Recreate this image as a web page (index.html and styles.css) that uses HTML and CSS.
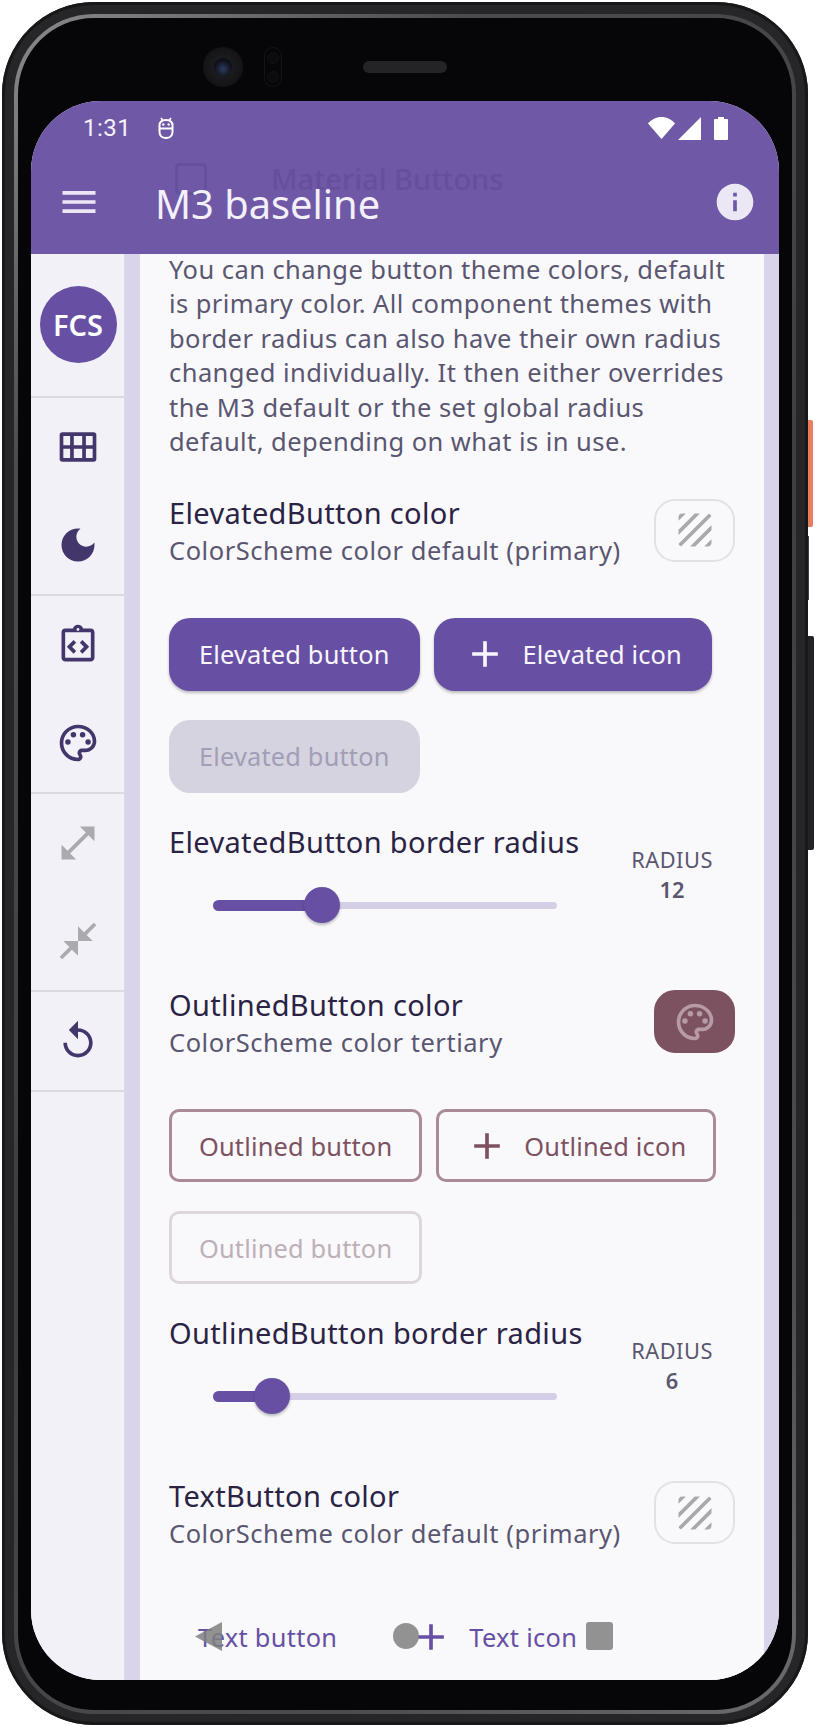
FILE: index.html
```html
<!DOCTYPE html>
<html lang="en">
<head>
<meta charset="utf-8">
<title>M3 baseline</title>
<link rel="stylesheet" href="styles.css">
</head>
<body>
<div class="device">
  <span class="side side-orange"></span>
  <span class="side side-seam"></span>
  <span class="side side-power"></span>
  <div class="rim">
    <div class="bezel">
      <div class="sensors">
        <span class="camera"><span class="lens"></span></span>
        <span class="pill"><span class="pill-dot"></span><span class="pill-dot"></span></span>
        <span class="speaker"></span>
      </div>
      <div class="screen">
        <header class="appbar">
          <div class="ghost">
            <span class="ghost-box"></span>
            <span class="ghost-text">Material Buttons</span>
          </div>
          <div class="status">
            <span class="clock">1:31</span>
            <svg class="bug" viewBox="0 0 16 22"><path d="M3 1l2 2.500M13 1l-2 2.500" fill="none" stroke="#fff" stroke-width="1.600"/><path d="M1.500 8.500C1.500 5 4 3 8 3s6.500 2 6.500 5.500v6.500C14.500 18.500 12 21 8 21s-6.500-2.500-6.500-6V8.500zM1.500 11.500h13" fill="none" stroke="#fff" stroke-width="2"/><circle cx="5.300" cy="7.500" r="1.200" fill="#fff"/><circle cx="10.700" cy="7.500" r="1.200" fill="#fff"/></svg>
            <span class="status-gap"></span>
            <svg class="wifi" viewBox="0 0 27 22"><path d="M13.500 22L0 6.500C3.500 2.500 8 0 13.500 0S23.500 2.500 27 6.500z" fill="#fff"/></svg>
            <svg class="signal" viewBox="0 0 23 23"><path d="M23 0v23H0z" fill="#fff"/></svg>
            <svg class="battery" viewBox="0 0 14 23"><path d="M4 2V0h6v2h3a1 1 0 0 1 1 1v19a1 1 0 0 1-1 1H1a1 1 0 0 1-1-1V3a1 1 0 0 1 1-1z" fill="#fff"/></svg>
          </div>
          <div class="toolbar">
            <svg class="icon bar-icon" viewBox="0 0 24 24"><path d="M3 18h18v-2H3v2zm0-5h18v-2H3v2zm0-7v2h18V6H3z"/></svg>
            <h1 class="app-title">M3 baseline</h1>
            <svg class="icon bar-icon info" viewBox="0 0 24 24"><path d="M12 2C6.480 2 2 6.480 2 12s4.480 10 10 10 10-4.480 10-10S17.520 2 12 2zm1 15h-2v-6h2v6zm0-8h-2V7h2v2z"/></svg>
          </div>
        </header>
        <div class="body">
          <nav class="rail">
            <div class="rail-head"><span class="logo">FCS</span></div>
            <div class="rail-group">
              <div class="rail-item"><svg class="icon" viewBox="0 0 24 24"><path d="M3.500 4h17A1.500 1.500 0 0 1 22 5.500v13a1.500 1.500 0 0 1-1.500 1.500h-17A1.500 1.500 0 0 1 2 18.500v-13A1.500 1.500 0 0 1 3.500 4zM4 6v5h3.700V6zm5.700 0v5h4.600V6zm6.600 0v5H20V6zM4 13v5h3.700v-5zm5.700 0v5h4.600v-5zm6.600 0v5H20v-5z" fill-rule="evenodd"/></svg></div>
              <div class="rail-item"><svg class="icon" viewBox="0 0 24 24"><path d="M12 3c-4.970 0-9 4.030-9 9s4.030 9 9 9 9-4.030 9-9c0-.46-.04-.92-.1-1.360-.98 1.370-2.580 2.260-4.400 2.260-2.980 0-5.400-2.420-5.400-5.400 0-1.810.89-3.420 2.260-4.400-.44-.06-.9-.1-1.360-.1z"/></svg></div>
            </div>
            <div class="rail-group">
              <div class="rail-item"><svg class="icon" viewBox="0 0 24 24"><path d="M19 3h-4.180C14.400 1.840 13.300 1 12 1s-2.400.84-2.820 2H5c-1.100 0-2 .9-2 2v14c0 1.100.9 2 2 2h14c1.100 0 2-.9 2-2V5c0-1.100-.9-2-2-2zm-7-.25c.41 0 .75.34.75.75s-.34.75-.75.75-.75-.34-.75-.75.34-.75.75-.75zM19 19H5V5h14v14z"/><path d="M10.300 10l-3 3 3 3M13.700 10l3 3-3 3" fill="none" stroke="currentColor" stroke-width="2"/></svg></div>
              <div class="rail-item"><svg class="icon" viewBox="0 0 24 24"><path d="M12 22C6.490 22 2 17.510 2 12S6.490 2 12 2s10 4.040 10 9c0 3.310-2.690 6-6 6h-1.770c-.28 0-.5.22-.5.5 0 .12.05.23.13.33.41.47.64 1.060.64 1.670 0 1.380-1.120 2.500-2.500 2.500zm0-18c-4.410 0-8 3.590-8 8s3.590 8 8 8c.28 0 .5-.22.5-.5 0-.16-.08-.28-.14-.35-.41-.46-.63-1.050-.63-1.650 0-1.380 1.120-2.500 2.500-2.500H16c2.210 0 4-1.790 4-4 0-3.860-3.590-7-8-7z"/><circle cx="6.500" cy="11.500" r="1.500"/><circle cx="9.500" cy="7.500" r="1.500"/><circle cx="14.500" cy="7.500" r="1.500"/><circle cx="17.500" cy="11.500" r="1.500"/></svg></div>
            </div>
            <div class="rail-group">
              <div class="rail-item"><svg class="icon muted" viewBox="0 0 24 24"><path d="M21 11V3h-8l3.290 3.290-10 10L3 13v8h8l-3.290-3.290 10-10z"/></svg></div>
              <div class="rail-item"><svg class="icon muted" viewBox="0 0 24 24"><path d="M22 3.410l-5.290 5.290L20 12h-8V4l3.290 3.290L20.590 2 22 3.410zM3.410 22l5.290-5.290L12 20v-8H4l3.290 3.290L2 20.590 3.410 22z"/></svg></div>
            </div>
            <div class="rail-group">
              <div class="rail-item"><svg class="icon" viewBox="0 0 24 24"><path d="M12 5V1L7 6l5 5V7c3.310 0 6 2.690 6 6s-2.690 6-6 6-6-2.690-6-6H4c0 4.420 3.580 8 8 8s8-3.580 8-8-3.580-8-8-8z"/></svg></div>
            </div>
          </nav>
          <div class="band">
            <main class="content">
              <p class="intro">You can change button theme colors, default is primary color. All component themes with border radius can also have their own radius changed individually. It then either overrides the M3 default or the set global radius default, depending on what is in use.</p>

              <div class="setting">
                <div class="setting-text">
                  <div class="setting-title">ElevatedButton color</div>
                  <div class="setting-sub">ColorScheme color default (primary)</div>
                </div>
                <span class="toggle"><svg class="icon hatch" viewBox="0 0 24 24"><path d="M19.510 3.080L3.080 19.510c.09.34.27.65.51.9.25.24.56.42.9.51L20.930 4.490c-.19-.69-.73-1.230-1.420-1.410zM11.880 3L3 11.880v2.830L14.710 3h-2.830zM5 3c-1.100 0-2 .9-2 2v2l4-4H5zm14 18c.55 0 1.050-.22 1.410-.59.37-.36.59-.86.59-1.410v-2l-4 4h2zm-9.710 0h2.830L21 12.120V9.290L9.290 21z"/></svg></span>
              </div>
              <div class="btn-wrap">
                <button class="btn filled">Elevated button</button>
                <button class="btn filled has-icon"><svg class="icon" viewBox="0 0 24 24"><path d="M19 13h-6v6h-2v-6H5v-2h6V5h2v6h6v2z"/></svg>Elevated icon</button>
                <button class="btn filled-off">Elevated button</button>
              </div>
              <div class="radius-row">
                <div class="radius-main">
                  <div class="setting-title">ElevatedButton border radius</div>
                  <div class="slider">
                    <span class="track"></span>
                    <span class="track-on" style="width:31.7%"></span>
                    <span class="thumb" style="left:31.7%"></span>
                  </div>
                </div>
                <div class="radius-value">
                  <div class="radius-label">RADIUS</div>
                  <div class="radius-num">12</div>
                </div>
              </div>

              <div class="setting">
                <div class="setting-text">
                  <div class="setting-title">OutlinedButton color</div>
                  <div class="setting-sub">ColorScheme color tertiary</div>
                </div>
                <span class="toggle toggle-on"><svg class="icon" viewBox="0 0 24 24"><path d="M12 22C6.490 22 2 17.510 2 12S6.490 2 12 2s10 4.040 10 9c0 3.310-2.690 6-6 6h-1.770c-.28 0-.5.22-.5.5 0 .12.05.23.13.33.41.47.64 1.060.64 1.670 0 1.380-1.120 2.500-2.500 2.500zm0-18c-4.410 0-8 3.590-8 8s3.590 8 8 8c.28 0 .5-.22.5-.5 0-.16-.08-.28-.14-.35-.41-.46-.63-1.050-.63-1.650 0-1.380 1.120-2.500 2.500-2.500H16c2.210 0 4-1.790 4-4 0-3.860-3.590-7-8-7z"/><circle cx="6.500" cy="11.500" r="1.500"/><circle cx="9.500" cy="7.500" r="1.500"/><circle cx="14.500" cy="7.500" r="1.500"/><circle cx="17.500" cy="11.500" r="1.500"/></svg></span>
              </div>
              <div class="btn-wrap">
                <button class="btn outlined">Outlined button</button>
                <button class="btn outlined has-icon"><svg class="icon" viewBox="0 0 24 24"><path d="M19 13h-6v6h-2v-6H5v-2h6V5h2v6h6v2z"/></svg>Outlined icon</button>
                <button class="btn outlined-off">Outlined button</button>
              </div>
              <div class="radius-row">
                <div class="radius-main">
                  <div class="setting-title">OutlinedButton border radius</div>
                  <div class="slider">
                    <span class="track"></span>
                    <span class="track-on" style="width:17.200%"></span>
                    <span class="thumb" style="left:17.200%"></span>
                  </div>
                </div>
                <div class="radius-value">
                  <div class="radius-label">RADIUS</div>
                  <div class="radius-num">6</div>
                </div>
              </div>

              <div class="setting">
                <div class="setting-text">
                  <div class="setting-title">TextButton color</div>
                  <div class="setting-sub">ColorScheme color default (primary)</div>
                </div>
                <span class="toggle"><svg class="icon hatch" viewBox="0 0 24 24"><path d="M19.510 3.080L3.080 19.510c.09.34.27.65.51.9.25.24.56.42.9.51L20.930 4.490c-.19-.69-.73-1.230-1.420-1.410zM11.880 3L3 11.880v2.830L14.710 3h-2.830zM5 3c-1.100 0-2 .9-2 2v2l4-4H5zm14 18c.55 0 1.050-.22 1.410-.59.37-.36.59-.86.59-1.410v-2l-4 4h2zm-9.710 0h2.830L21 12.120V9.290L9.290 21z"/></svg></span>
              </div>
              <div class="btn-wrap">
                <button class="btn text">Text button</button>
                <button class="btn text has-icon"><svg class="icon" viewBox="0 0 24 24"><path d="M19 13h-6v6h-2v-6H5v-2h6V5h2v6h6v2z"/></svg>Text icon</button>
              </div>
            </main>
          </div>
        </div>
        <span class="nav nav-back"></span>
        <span class="nav nav-home"></span>
        <span class="nav nav-recent"></span>
      </div>
    </div>
  </div>
</div>
</body>
</html>
```
FILE: styles.css
```css
* { box-sizing: border-box; }
html, body { margin: 0; padding: 0; height: 1727px; overflow: hidden; background: #fff; }
body { font-family: "Noto Sans", sans-serif; }

/* device */
.device {
  position: relative;
  width: 806px;
  height: 1723px;
  margin: 2px 0 0 2px;
  padding: 12px 12px 11px;
  border-radius: 92px;
  background: #262628;
  box-shadow: inset 0 0 0 3px #18181a;
}
.side { position: absolute; left: 806px; }
.side-orange { top: 418px; width: 5px; height: 107px; background: #e87d5f; border-radius: 0 2px 2px 0; }
.side-seam { top: 534px; width: 1px; height: 64px; background: #444; }
.side-power { top: 634px; width: 6px; height: 214px; background: #232325; border-radius: 0 2px 2px 0; }
.rim {
  height: 100%;
  padding: 4px;
  border-radius: 80px;
  background: linear-gradient(135deg, #8b8b8e 0%, #4c4c4e 18%, #3e3e40 50%, #4c4c4e 82%, #6c6c6e 100%);
}
.bezel {
  display: flex;
  flex-direction: column;
  height: 100%;
  padding: 0 13px 30px;
  border-radius: 76px;
  background: #060608;
}
.sensors {
  display: flex;
  flex: none;
  align-items: center;
  height: 83px;
  padding: 15px 0 0 172px;
}
.camera {
  display: flex;
  align-items: center;
  justify-content: center;
  width: 40px;
  height: 40px;
  border-radius: 50%;
  background: radial-gradient(circle, #232326 0%, #17171a 55%, #0c0c0e 100%);
}
.lens {
  width: 18px;
  height: 18px;
  border-radius: 50%;
  background: radial-gradient(circle at 50% 62%, #2c3c60 0%, #0f111a 60%, #08080b 100%);
}
.pill {
  display: flex;
  flex-direction: column;
  align-items: center;
  justify-content: space-around;
  width: 18px;
  height: 40px;
  margin-left: 21px;
  border: 1px solid #141416;
  border-radius: 9px;
}
.pill-dot { width: 12px; height: 12px; border-radius: 50%; background: #0c0c0e; border: 1px solid #121214; }
.speaker {
  width: 84px;
  height: 12px;
  margin-left: 81px;
  border-radius: 6px;
  background: #242427;
}

/* screen */
.screen {
  position: relative;
  display: flex;
  flex: 1;
  flex-direction: column;
  min-height: 0;
  overflow: hidden;
  border-radius: 70px;
  background: #f9f9fc;
}
.icon { display: block; flex: none; width: 44px; height: 44px; fill: currentColor; color: #43366b; }
.icon.muted { color: #aaaaaf; }

.appbar {
  position: relative;
  flex: none;
  height: 153px;
  background: #6f59a6;
  color: #fff;
}
.ghost {
  position: absolute;
  top: 58px;
  left: 144px;
  display: flex;
  align-items: center;
  color: #64509b;
}
.ghost-box { width: 32px; height: 32px; border: 3px solid currentColor; border-radius: 5px; }
.ghost-text { margin-left: 64px; font-size: 29px; font-weight: 500; line-height: 40px; white-space: nowrap; }
.status {
  position: relative;
  display: flex;
  align-items: center;
  height: 54px;
  padding: 0 51px 0 52px;
}
.clock { font-family: Roboto, sans-serif; font-size: 24px; font-weight: 400; letter-spacing: .5px; color: #f4f1fa; }
.bug { width: 16px; height: 22px; margin-left: 27px; }
.status-gap { flex: 1; }
.wifi { width: 27px; height: 22px; }
.signal { width: 23px; height: 23px; margin-left: 3px; }
.battery { width: 14px; height: 23px; margin-left: 13px; }
.toolbar {
  position: relative;
  display: flex;
  align-items: center;
  height: 50px;
  margin-top: 22px;
  padding: 0 22px 0 26px;
}
.bar-icon { color: #ebe7f5; }
.app-title {
  position: relative;
  top: 2px;
  flex: 1;
  margin: 0 0 0 54px;
  font-size: 39.800px;
  font-weight: 400;
  line-height: 50px;
  color: #f3f0f9;
}

.body { display: flex; flex: 1; min-height: 0; }
.rail { flex: none; width: 94px; background: #f3f1f8; border-right: 1px solid #dcdae3; }
.rail-head {
  display: flex;
  align-items: center;
  justify-content: center;
  height: 144px;
  padding: 0 0 2px 1px;
  border-bottom: 2px solid #dcdae1;
}
.logo {
  display: flex;
  align-items: center;
  justify-content: center;
  width: 77px;
  height: 77px;
  border-radius: 50%;
  background: #6750a4;
  color: #fff;
  font-size: 29px;
  font-weight: 600;
}
.rail-group { border-bottom: 2px solid #dcdae1; }
.rail-item { display: flex; align-items: center; justify-content: center; height: 98px; }

.band { flex: 1; min-width: 0; padding: 0 15px; background: #d9d4e9; }
.content { height: 100%; padding: 0 29px; background: #f9f9fc; overflow: hidden; }

.intro {
  margin: -2px 0 0;
  font-size: 25.500px;
  line-height: 34.400px;
  letter-spacing: .44px;
  color: #5a5670;
}
.setting {
  display: flex;
  align-items: center;
  justify-content: space-between;
  margin-top: 34px;
}
.setting-title { font-size: 29px; line-height: 41px; letter-spacing: .34px; color: #2a2344; white-space: nowrap; }
.setting-sub { font-size: 25.500px; line-height: 34.400px; letter-spacing: .53px; color: #5a5670; white-space: nowrap; }
.toggle {
  display: flex;
  flex: none;
  align-items: center;
  justify-content: center;
  width: 81px;
  height: 63px;
  border: 2px solid #e2e1e6;
  border-radius: 21px;
}
.hatch { color: #a9a9ac; }
.toggle-on { background: #7d5260; border-color: #7d5260; }
.toggle-on .icon { color: #b69aa6; }

.btn-wrap {
  display: flex;
  flex-wrap: wrap;
  gap: 29px 14px;
  margin-top: 50px;
}
.btn {
  display: flex;
  align-items: center;
  height: 73px;
  padding: 0 30px;
  border: 0;
  background: none;
  font-family: inherit;
  font-size: 25.400px;
  letter-spacing: .17px;
  white-space: nowrap;
}
.btn.has-icon { padding-left: 29px; }
.btn.has-icon .icon { margin-right: 16px; color: inherit; }
.filled { border-radius: 21px; background: #6750a4; color: #f8f6fc; box-shadow: 0 2px 3px rgba(0, 0, 0, .25); }
.filled-off { border-radius: 21px; background: #d5d3df; color: #a29eb7; }
.outlined { padding: 0 27px; border: 3px solid #a98b96; border-radius: 10px; color: #7d5260; }
.btn.outlined.has-icon { padding-left: 26px; }
.btn.outlined.has-icon .icon { margin-right: 15px; }
.outlined-off { padding: 0 27px; border: 3px solid #ddd6da; border-radius: 10px; color: #bdb0b8; }
.text { color: #6750a4; padding: 0 29px; letter-spacing: .3px; }

.radius-row { display: flex; height: 163px; margin-top: 28px; margin-bottom: -34px; }
.radius-main { flex: 1; min-width: 0; }
.slider { position: relative; width: 344px; height: 36px; margin: 25px 0 0 44px; }
.track { position: absolute; left: 0; right: 0; top: 15px; height: 7px; border-radius: 4px; background: #d4cfe6; }
.track-on { position: absolute; left: 0; top: 13px; height: 11px; border-radius: 6px; background: #6750a4; }
.thumb {
  position: absolute;
  top: 0;
  width: 36px;
  height: 36px;
  margin-left: -18px;
  border-radius: 50%;
  background: #6750a4;
  box-shadow: 0 2px 3px rgba(0, 0, 0, .25);
}
.radius-value { flex: none; width: 126px; padding-top: 24px; text-align: center; color: #5a5670; }
.radius-label { font-size: 21.800px; line-height: 30px; letter-spacing: .5px; }
.radius-num { font-size: 21.800px; font-weight: 600; line-height: 29px; }

/* system navigation gestures over the content */
.nav { position: absolute; background: rgba(128, 128, 128, .85); }
.nav-back { left: 164px; top: 1521px; width: 27px; height: 29px; clip-path: polygon(0 50%, 100% 0, 100% 100%); }
.nav-home { left: 362px; top: 1522px; width: 26px; height: 26px; border-radius: 50%; }
.nav-recent { left: 555px; top: 1521px; width: 27px; height: 28px; border-radius: 3px; }
```
